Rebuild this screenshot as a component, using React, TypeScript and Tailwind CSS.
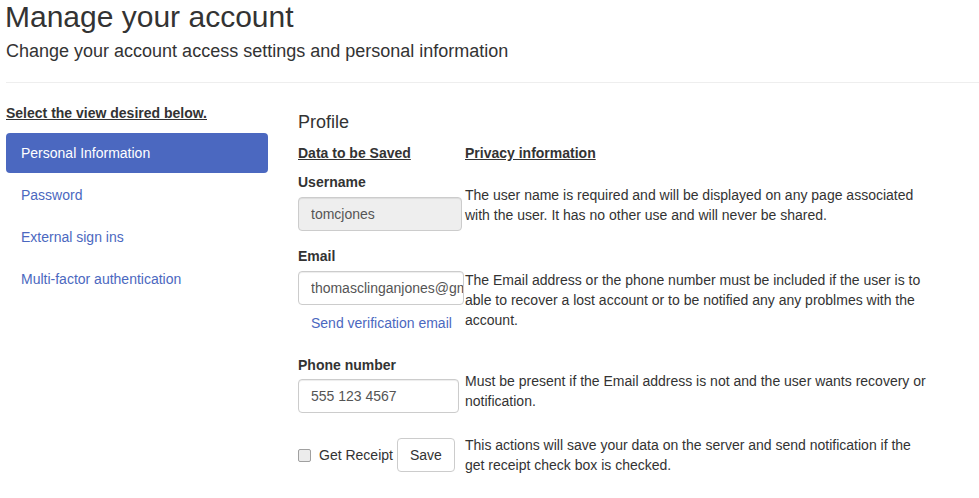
const navItems = ['Personal Information', 'Password', 'External sign ins', 'Multi-factor authentication']

function FieldRow({ children, note, noteTop }: { children: React.ReactNode; note: string; noteTop: string }) {
  return (
    <div className="grid grid-cols-[167px_466px]">
      <div>{children}</div>
      <p className={`${noteTop} leading-5`}>{note}</p>
    </div>
  )
}

export default function App() {
  return (
    <div className="min-h-screen bg-white pl-[6px] text-[14px] text-[#333] font-['Liberation_Sans',Arial,sans-serif]">
      <h1 className="-ml-px text-[30px] leading-[33px]">Manage your account</h1>
      <h4 className="mt-2 text-[18px] leading-5">Change your account access settings and personal information</h4>
      <hr className="mt-[21px] border-t border-[#eee]" />

      <div className="mt-5 flex">
        <div className="w-[262px] shrink-0">
          <p className="font-bold leading-5 underline">Select the view desired below.</p>
          <ul className="mt-[10px] flex flex-col gap-[2px]">
            {navItems.map((item, i) => (
              <li key={item}>
                <a
                  href="#"
                  className={`block rounded px-[15px] py-[10px] leading-5 ${
                    i === 0 ? 'bg-[#4b68c0] text-white' : 'text-[#4b68c0]'
                  }`}
                >
                  {item}
                </a>
              </li>
            ))}
          </ul>
        </div>

        <div className="ml-[30px] mt-[9px]">
          <h4 className="text-[18px] leading-5">Profile</h4>

          <div className="mt-[11px] grid grid-cols-[167px_466px] font-bold leading-5">
            <span className="underline">Data to be Saved</span>
            <span className="underline">Privacy information</span>
          </div>

          <div className="mt-[9px]">
            <FieldRow
              noteTop="pt-[13px]"
              note="The user name is required and will be displayed on any page associated with the user. It has no other use and will never be shared."
            >
              <label className="block font-bold leading-5">Username</label>
              <input
                disabled
                value="tomcjones"
                className="mt-[5px] h-[34px] w-[164px] rounded border border-[#ccc] bg-[#eee] px-3 text-[#555] shadow-[inset_0_1px_1px_rgba(0,0,0,0.075)]"
              />
            </FieldRow>
          </div>

          <div className="mt-[15px]">
            <FieldRow
              noteTop="pt-6"
              note="The Email address or the phone number must be included if the user is to able to recover a lost account or to be notified any any problmes with the account."
            >
              <label className="block font-bold leading-5">Email</label>
              <input
                readOnly
                value="thomasclinganjones@gmail.com"
                className="mt-[5px] h-[34px] w-[166px] rounded border border-[#ccc] bg-white pl-3 pr-0 text-[#555] shadow-[inset_0_1px_1px_rgba(0,0,0,0.075)]"
              />
              <a href="#" className="mt-2 block pl-[13px] leading-5 text-[#4b68c0]">
                Send verification email
              </a>
            </FieldRow>
          </div>

          <div className="mt-[22px]">
            <FieldRow
              noteTop="pt-4"
              note="Must be present if the Email address is not and the user wants recovery or notification."
            >
              <label className="block font-bold leading-5">Phone number</label>
              <input
                readOnly
                value="555 123 4567"
                className="mt-1 h-[34px] w-[161px] rounded border border-[#ccc] bg-white px-3 text-[#555] shadow-[inset_0_1px_1px_rgba(0,0,0,0.075)]"
              />
            </FieldRow>
          </div>

          <div className="mt-[22px]">
            <FieldRow
              noteTop="pt-0"
              note="This actions will save your data on the server and send notification if the get receipt check box is checked."
            >
              <div className="flex items-center pt-[3px]">
                <input
                  type="checkbox"
                  className="m-0 h-[13px] w-[13px] appearance-none rounded-[2px] border border-[#a0a0a0] bg-[#ececec]"
                />
                <span className="ml-2 leading-5">Get Receipt</span>
                <button className="ml-1 h-[34px] rounded border border-[#ccc] bg-white px-3 leading-5 text-[#333]">
                  Save
                </button>
              </div>
            </FieldRow>
          </div>
        </div>
      </div>
    </div>
  )
}
